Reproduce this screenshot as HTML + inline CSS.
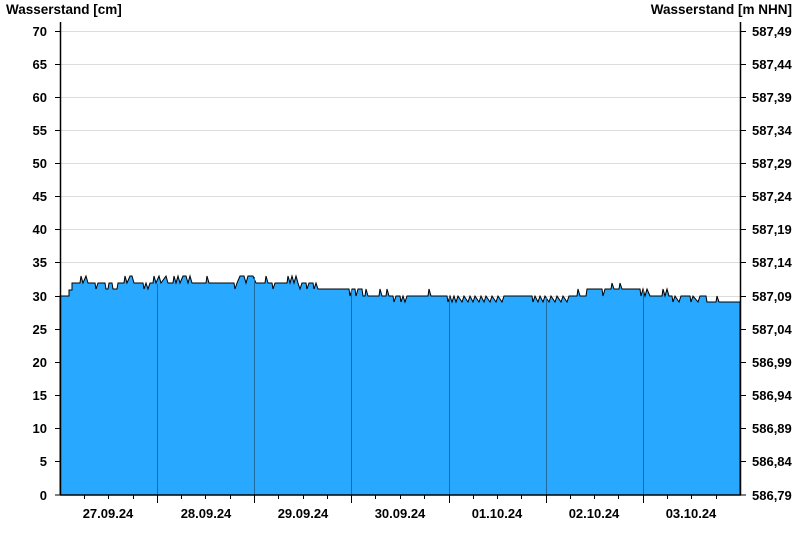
<!DOCTYPE html>
<html><head><style>body{margin:0;background:#fff}svg{display:block}text{font-family:"Liberation Sans",Arial,sans-serif;font-weight:bold;font-size:13px;fill:#000}</style></head><body>
<svg width="800" height="550" xmlns="http://www.w3.org/2000/svg">
<text x="6" y="14" style="font-size:13.5px">Wasserstand [cm]</text>
<text x="792" y="14" text-anchor="end" style="font-size:13.5px">Wasserstand [m NHN]</text>
<g id="grid" stroke="#dcdcdc" stroke-width="1">
<line x1="60" x2="740" y1="31.5" y2="31.5"/><line x1="60" x2="740" y1="64.5" y2="64.5"/><line x1="60" x2="740" y1="97.5" y2="97.5"/><line x1="60" x2="740" y1="130.5" y2="130.5"/><line x1="60" x2="740" y1="163.5" y2="163.5"/><line x1="60" x2="740" y1="196.5" y2="196.5"/><line x1="60" x2="740" y1="229.5" y2="229.5"/><line x1="60" x2="740" y1="262.5" y2="262.5"/><line x1="60" x2="740" y1="296.5" y2="296.5"/>
</g>
<path fill="#29a8ff" stroke="#000" stroke-width="1" d="M60,495 L60,296 L69,296 L69,290 L72,290 L72,283 L80,283 L81,276 L83,283 L86,276 L88,283 L95,283 L96,289 L98,283 L105,283 L106,289 L108,289 L109,283 L112,283 L113,289 L117,289 L118,283 L124,283 L125,276 L127,283 L130,276 L132,276 L134,283 L143,283 L144,289 L146,283 L148,289 L150,283 L153,283 L154,276 L156,283 L159,276 L161,283 L166,276 L168,283 L173,283 L174,276 L176,283 L178,276 L180,283 L183,276 L186,276 L188,283 L190,276 L192,283 L206,283 L207,276 L209,283 L234,283 L235,289 L237,283 L240,276 L244,276 L246,283 L248,276 L253,276 L256,283 L265,283 L266,276 L268,283 L272,283 L273,289 L275,283 L287,283 L288,276 L290,283 L292,276 L294,283 L296,276 L298,283 L300,289 L302,283 L306,283 L307,289 L309,283 L313,283 L314,289 L316,283 L318,289 L349,289 L350,296 L352,289 L355,289 L356,296 L358,289 L362,289 L363,296 L365,296 L366,289 L368,296 L379,296 L380,289 L382,296 L386,296 L387,289 L389,296 L393,296 L394,302 L396,296 L400,296 L401,302 L403,296 L405,302 L407,296 L428,296 L429,289 L431,296 L447,296 L448,302 L450,296 L452,302 L454,296 L456,302 L458,296 L462,302 L464,296 L468,302 L470,296 L473,302 L475,296 L479,302 L481,296 L484,302 L486,296 L490,302 L492,296 L496,302 L498,296 L502,302 L504,296 L532,296 L533,302 L535,296 L538,302 L540,296 L543,302 L545,296 L549,302 L551,296 L555,302 L557,296 L561,302 L563,296 L567,302 L569,296 L577,296 L578,289 L580,296 L586,296 L587,289 L602,289 L603,296 L605,289 L611,289 L612,283 L614,289 L619,289 L620,283 L622,289 L640,289 L641,296 L643,289 L645,296 L647,289 L650,296 L662,296 L663,289 L665,296 L667,289 L669,296 L672,296 L673,302 L675,296 L679,302 L681,296 L690,296 L691,302 L693,296 L698,302 L700,296 L706,296 L707,302 L716,302 L717,296 L719,302 L740,302 L740,495 Z"/>
<g stroke="#1c6a9e" stroke-width="1">
<line x1="157.5" x2="157.5" y1="284" y2="495"/><line x1="254.5" x2="254.5" y1="277" y2="495"/><line x1="351.5" x2="351.5" y1="290" y2="495"/><line x1="449.5" x2="449.5" y1="297" y2="495"/><line x1="546.5" x2="546.5" y1="297" y2="495"/><line x1="643.5" x2="643.5" y1="290" y2="495"/>
</g>
<g stroke="#000" stroke-width="1.5">
<line x1="60.5" x2="60.5" y1="22" y2="495"/><line x1="740.5" x2="740.5" y1="22" y2="495"/><line x1="60" x2="741" y1="495" y2="495"/>
</g>
<g stroke="#000" stroke-width="1" id="ticks">
<line x1="55" x2="60" y1="31.5" y2="31.5"/><line x1="55" x2="60" y1="64.5" y2="64.5"/><line x1="55" x2="60" y1="97.5" y2="97.5"/><line x1="55" x2="60" y1="130.5" y2="130.5"/><line x1="55" x2="60" y1="163.5" y2="163.5"/><line x1="55" x2="60" y1="196.5" y2="196.5"/><line x1="55" x2="60" y1="229.5" y2="229.5"/><line x1="55" x2="60" y1="262.5" y2="262.5"/><line x1="55" x2="60" y1="296.5" y2="296.5"/><line x1="55" x2="60" y1="329.5" y2="329.5"/><line x1="55" x2="60" y1="362.5" y2="362.5"/><line x1="55" x2="60" y1="395.5" y2="395.5"/><line x1="55" x2="60" y1="428.5" y2="428.5"/><line x1="55" x2="60" y1="461.5" y2="461.5"/><line x1="55" x2="60" y1="495" y2="495"/>
<line x1="740" x2="746" y1="31.5" y2="31.5"/><line x1="740" x2="746" y1="64.5" y2="64.5"/><line x1="740" x2="746" y1="97.5" y2="97.5"/><line x1="740" x2="746" y1="130.5" y2="130.5"/><line x1="740" x2="746" y1="163.5" y2="163.5"/><line x1="740" x2="746" y1="196.5" y2="196.5"/><line x1="740" x2="746" y1="229.5" y2="229.5"/><line x1="740" x2="746" y1="262.5" y2="262.5"/><line x1="740" x2="746" y1="296.5" y2="296.5"/><line x1="740" x2="746" y1="329.5" y2="329.5"/><line x1="740" x2="746" y1="362.5" y2="362.5"/><line x1="740" x2="746" y1="395.5" y2="395.5"/><line x1="740" x2="746" y1="428.5" y2="428.5"/><line x1="740" x2="746" y1="461.5" y2="461.5"/><line x1="740" x2="746" y1="495" y2="495"/>
<path d="M157.5,495v8M254.5,495v8M351.5,495v8M449.5,495v8M546.5,495v8M643.5,495v8 M84.5,495v4M108.5,495v4M133.5,495v4M181.5,495v4M205.5,495v4M230.5,495v4M278.5,495v4M303.5,495v4M327.5,495v4M375.5,495v4M400.5,495v4M424.5,495v4M473.5,495v4M497.5,495v4M521.5,495v4M570.5,495v4M594.5,495v4M618.5,495v4M667.5,495v4M691.5,495v4M716.5,495v4"/>
</g>
<g text-anchor="end">
<text x="47" y="36">70</text><text x="47" y="69">65</text><text x="47" y="102">60</text><text x="47" y="135">55</text><text x="47" y="168">50</text><text x="47" y="201">45</text><text x="47" y="234">40</text><text x="47" y="267">35</text><text x="47" y="301">30</text><text x="47" y="334">25</text><text x="47" y="367">20</text><text x="47" y="400">15</text><text x="47" y="433">10</text><text x="47" y="466">5</text><text x="47" y="500">0</text>
</g>
<g>
<text x="752" y="36">587,49</text><text x="752" y="69">587,44</text><text x="752" y="102">587,39</text><text x="752" y="135">587,34</text><text x="752" y="168">587,29</text><text x="752" y="201">587,24</text><text x="752" y="234">587,19</text><text x="752" y="267">587,14</text><text x="752" y="301">587,09</text><text x="752" y="334">587,04</text><text x="752" y="367">586,99</text><text x="752" y="400">586,94</text><text x="752" y="433">586,89</text><text x="752" y="466">586,84</text><text x="752" y="500">586,79</text>
</g>
<g text-anchor="middle">
<text x="108" y="518">27.09.24</text><text x="206" y="518">28.09.24</text><text x="303" y="518">29.09.24</text><text x="400" y="518">30.09.24</text><text x="497" y="518">01.10.24</text><text x="594" y="518">02.10.24</text><text x="691" y="518">03.10.24</text>
</g>
</svg>
</body></html>
